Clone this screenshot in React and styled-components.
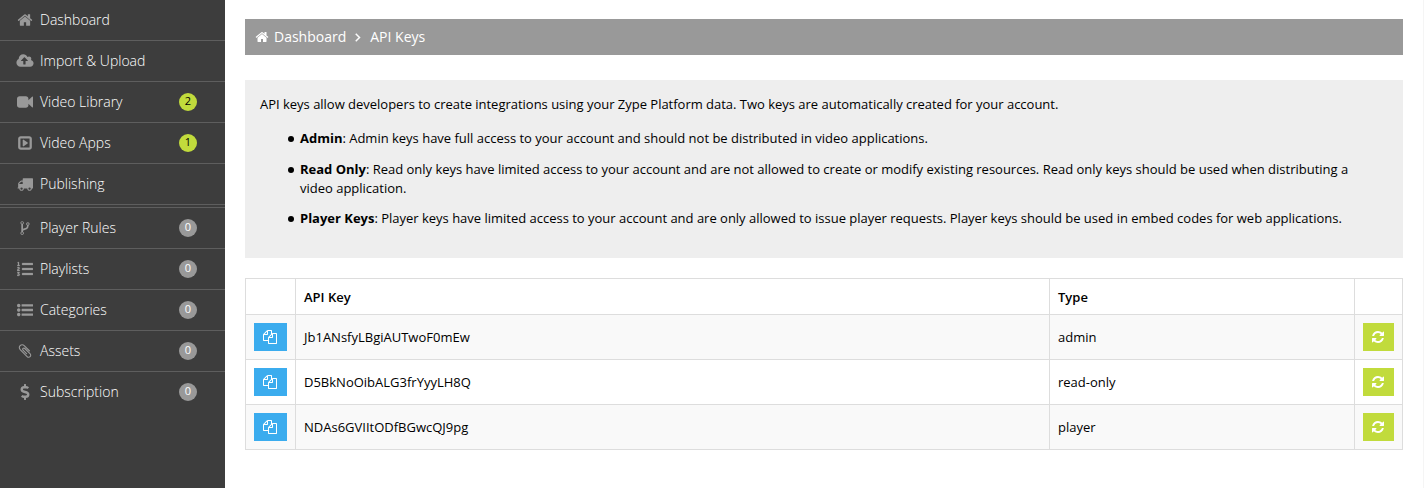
import React from "react";
import styled, { createGlobalStyle } from "styled-components";
import { FaListOl, FaDollarSign } from "react-icons/fa";

const GlobalStyle = createGlobalStyle`
  * { box-sizing: border-box; }
  body {
    margin: 0;
    background: #fff;
    color: #000;
    font-family: "Open Sans", "Noto Sans", sans-serif;
    font-size: 13px;
    line-height: 19px;
  }
`;

const paths = {
  home: "M1472 992v480q0 26-19 45t-45 19h-384v-384h-256v384h-384q-26 0-45-19t-19-45v-480q0-1 .5-3t.5-3l575-474 575 474q1 2 1 6zm223-69l-62 74q-8 9-21 11h-3q-13 0-21-7l-692-577-692 577q-12 8-24 7-13-2-21-11l-62-74q-8-10-7-23.5t11-21.5l719-599q32-26 76-26t76 26l244 204v-195q0-14 9-23t23-9h192q14 0 23 9t9 23v408l219 182q10 8 11 21.5t-7 23.5z",
  upload: "M1216 864q0-14-9-23l-352-352q-9-9-23-9t-23 9l-351 351q-10 12-10 24 0 14 9 23t23 9h224v352q0 13 9.5 22.5t22.5 9.5h192q13 0 22.5-9.5t9.5-22.5v-352h224q13 0 22.5-9.5t9.5-22.5zm640 288q0 159-112.5 271.5t-271.5 112.5h-1088q-185 0-316.5-131.5t-131.5-316.5q0-130 70-240t188-165q-2-30-2-43 0-212 150-362t362-150q156 0 285.5 87t188.5 231q71-62 166-62 106 0 181 75t75 181q0 76-41 138 130 31 213.5 135.5t83.5 238.5z",
  camera: "M1792 352v1088q0 42-39 59-13 5-25 5-27 0-45-19l-403-403v166q0 119-84.5 203.5t-203.5 84.5h-704q-119 0-203.5-84.5t-84.5-203.5v-704q0-119 84.5-203.5t203.5-84.5h704q119 0 203.5 84.5t84.5 203.5v165l403-402q18-19 45-19 12 0 25 5 39 17 39 59z",
  play: "M1216 896q0 34-27 52l-448 320q-31 23-66 5-35-18-35-57v-640q0-39 35-57 35-18 66 5l448 320q27 18 27 52zm192 480v-960q0-13-9.5-22.5t-22.5-9.5h-960q-13 0-22.5 9.5t-9.5 22.5v960q0 13 9.5 22.5t22.5 9.5h960q13 0 22.5-9.5t9.5-22.5zm256-960v960q0 119-84.5 203.5t-203.5 84.5h-960q-119 0-203.5-84.5t-84.5-203.5v-960q0-119 84.5-203.5t203.5-84.5h960q119 0 203.5 84.5t84.5 203.5z",
  truck: "M640 1408q0-52-38-90t-90-38-90 38-38 90 38 90 90 38 90-38 38-90zm-384-512h384v-256h-158q-13 0-22 9l-195 195q-9 9-9 22v30zm1280 512q0-52-38-90t-90-38-90 38-38 90 38 90 90 38 90-38 38-90zm256-1088v1024q0 15-4 26.5t-13.5 18.5-16.5 11.5-23.5 6-22.5 2-25.5 0-22.5-.5q0 106-75 181t-181 75-181-75-75-181h-384q0 106-75 181t-181 75-181-75-75-181h-64q-3 0-22.5.5t-25.5 0-22.5-2-23.5-6-16.5-11.5-13.5-18.5-4-26.5q0-26 19-45t45-19v-320q0-8-.5-35t0-38 2.5-34.5 6.5-37 14-30.5 22.5-30l198-198q19-19 50.5-32t58.5-13h160v-192q0-26 19-45t45-19h1024q26 0 45 19t19 45z",
  fork: "M672 1472q0-40-28-68t-68-28-68 28-28 68 28 68 68 28 68-28 28-68zm0-1152q0-40-28-68t-68-28-68 28-28 68 28 68 68 28 68-28 28-68zm640 128q0-40-28-68t-68-28-68 28-28 68 28 68 68 28 68-28 28-68zm96 0q0 52-26 96.5t-70 69.5q-2 287-226 414-67 38-203 81-128 40-169.5 71t-41.5 100v26q44 25 70 69.5t26 96.5q0 80-56 136t-136 56-136-56-56-136q0-52 26-96.5t70-69.5v-820q-44-25-70-69.5t-26-96.5q0-80 56-136t136-56 136 56 56 136q0 52-26 96.5t-70 69.5v497q54-26 154-57 55-17 87.5-29.5t70.5-31 59-39.5 40.5-51 28-69.5 8.5-91.5q-44-25-70-69.5t-26-96.5q0-80 56-136t136-56 136 56 56 136z",
  list: "M384 1408q0 80-56 136t-136 56-136-56-56-136 56-136 136-56 136 56 56 136zm0-512q0 80-56 136t-136 56-136-56-56-136 56-136 136-56 136 56 56 136zm1408 416v192q0 13-9.5 22.5t-22.5 9.5h-1216q-13 0-22.5-9.5t-9.5-22.5v-192q0-13 9.5-22.5t22.5-9.5h1216q13 0 22.5 9.5t9.5 22.5zm-1408-928q0 80-56 136t-136 56-136-56-56-136 56-136 136-56 136 56 56 136zm1408 416v192q0 13-9.5 22.5t-22.5 9.5h-1216q-13 0-22.5-9.5t-9.5-22.5v-192q0-13 9.5-22.5t22.5-9.5h1216q13 0 22.5 9.5t9.5 22.5zm0-512v192q0 13-9.5 22.5t-22.5 9.5h-1216q-13 0-22.5-9.5t-9.5-22.5v-192q0-13 9.5-22.5t22.5-9.5h1216q13 0 22.5 9.5t9.5 22.5z",
  clip: "M1596 1385q0 117-79 196t-196 79q-135 0-235-100l-777-776q-113-115-113-271 0-159 110-270t269-111q158 0 273 113l605 606q10 10 10 22 0 16-30.5 46.5t-46.5 30.5q-13 0-23-10l-606-607q-79-77-181-77-106 0-179 75t-73 181q0 105 76 181l776 777q63 63 145 63 64 0 106-42t42-106q0-82-63-145l-581-581q-26-24-60-24-29 0-48 19t-19 48q0 32 25 59l410 410q10 10 10 22 0 16-31 47t-47 31q-12 0-22-10l-410-410q-63-61-63-149 0-82 57-139t139-57q88 0 149 63l581 581q100 98 100 235z",
  copy: "M1696 384q40 0 68 28t28 68v1216q0 40-28 68t-68 28h-960q-40 0-68-28t-28-68v-288h-544q-40 0-68-28t-28-68v-672q0-40 20-88t48-76l408-408q28-28 76-48t88-20h416q40 0 68 28t28 68v328q68-40 128-40h416zm-544 213l-299 299h299v-299zm-640-384l-299 299h299v-299zm196 647l316-316v-416h-384v416q0 40-28 68t-68 28h-416v640h512v-256q0-40 20-88t48-76zm956 804v-1152h-384v416q0 40-28 68t-68 28h-416v640h896z",
  refresh: "M1639 1056q0 5-1 7-64 268-268 434.5t-478 166.5q-146 0-282.5-55t-243.5-157l-129 129q-19 19-45 19t-45-19-19-45v-448q0-26 19-45t45-19h448q26 0 45 19t19 45-19 45l-137 137q71 66 161 102t187 36q134 0 250-65t186-179q11-17 53-117 8-23 30-23h192q13 0 22.5 9.5t9.5 22.5zm25-800v448q0 26-19 45t-45 19h-448q-26 0-45-19t-19-45 19-45l138-138q-148-137-349-137-134 0-250 65t-186 179q-11 17-53 117-8 23-30 23h-199q-13 0-22.5-9.5t-9.5-22.5v-7q65-268 270-434.5t480-166.5q146 0 284 55.5t245 156.5l130-129q19-19 45-19t45 19 19 45z",
  angle: "M1171 960q0 13-10 23l-466 466q-10 10-23 10t-23-10l-50-50q-10-10-10-23t10-23l393-393-393-393q-10-10-10-23t10-23l50-50q10-10 23-10t23 10l466 466q10 10 10 23z",
};

const Svg = styled.svg`
  display: block;
  flex: none;
  overflow: visible;
  fill: currentColor;
  stroke: currentColor;
  stroke-width: ${(p) => p.$weight};
  width: ${(p) => p.$size}px;
  height: ${(p) => p.$size}px;
`;

const Icon = ({ name, size = 14, weight = 0 }) => (
  <Svg $size={size} $weight={weight} viewBox="0 0 1792 1792" aria-hidden="true">
    <path d={paths[name]} />
  </Svg>
);

const Page = styled.div`
  display: flex;
  height: 488px;
  overflow: hidden;
`;

const Sidebar = styled.nav`
  width: 225px;
  flex: none;
  background: #3d3d3d;
`;

const NavGroup = styled.ul`
  list-style: none;
  margin: 0;
  padding: 0;

  & + & {
    margin-top: 2px;
    border-top: 1px solid #5e5e5e;
  }
`;

const NavItem = styled.li`
  display: flex;
  align-items: center;
  height: 41px;
  padding: 0 28px 0 17px;
  border-bottom: 1px solid #5e5e5e;
  color: #fff;
  font-size: 14px;
  font-weight: 300;

  ${NavGroup} + ${NavGroup} > &:last-child {
    height: 40px;
    border-bottom: 0;
  }
`;

const NavIcon = styled.span`
  display: flex;
  justify-content: center;
  width: 16px;
  margin-right: 7px;
  color: #999;
`;

const NavLabel = styled.span`
  padding-bottom: 2px;
`;

const Badge = styled.span`
  width: 18px;
  height: 18px;
  margin-left: auto;
  border-radius: 50%;
  background: ${(p) => (p.$active ? "#c1db3c" : "#999")};
  color: ${(p) => (p.$active ? "#000" : "#fff")};
  font-size: 11px;
  font-weight: 400;
  line-height: 16px;
  text-align: center;
`;

const Main = styled.main`
  flex: 1;
  min-width: 0;
  padding: 19px 20px 0;
  border-right: 1px solid #f5f5f5;
`;

const Breadcrumb = styled.div`
  display: flex;
  align-items: center;
  height: 36px;
  padding: 0 10px;
  background: #999;
  color: #fff;
  font-size: 14px;
`;

const Crumb = styled.span`
  margin-left: 5px;
  padding-bottom: 2px;
`;

const Separator = styled.span`
  margin-left: 5px;
`;

const Info = styled.section`
  height: 178px;
  margin-top: 25px;
  padding: 15px;
  background: #eee;
`;

const Intro = styled.p`
  margin: 0 0 15px;
  letter-spacing: -0.015px;
`;

const KeyList = styled.ul`
  margin: 0;
  padding: 0 20px 0 27px;
  list-style: none;
  letter-spacing: -0.008px;
`;

const KeyNote = styled.li`
  display: flex;
  align-items: flex-start;
  margin-bottom: ${(p) => p.$gap}px;

  &::before {
    content: "";
    flex: none;
    width: 6px;
    height: 6px;
    margin: 7px 6px 0 1px;
    border-radius: 50%;
    background: #000;
  }
`;

const Table = styled.table`
  width: 1158px;
  margin-top: 20px;
  border-collapse: collapse;
  table-layout: fixed;
`;

const Col = styled.col`
  width: ${(p) => p.$width}px;
`;

const Head = styled.th`
  height: 36px;
  padding: 2px 8px 0;
  border: 1px solid #ddd;
  text-align: left;
  font-weight: 600;
`;

const Row = styled.tr`
  background: ${(p) => (p.$odd ? "#f9f9f9" : "#fff")};
`;

const Cell = styled.td`
  height: 45px;
  padding: 0 8px;
  border: 1px solid #ddd;
`;

const Button = styled.button`
  display: flex;
  align-items: center;
  justify-content: center;
  width: ${(p) => p.$width}px;
  height: 28px;
  padding: 0 1px 1px 0;
  border: 0;
  background: ${(p) => p.$color};
  color: #fff;
`;

const mainNav = [
  { label: "Dashboard", icon: <Icon name="home" size={16} /> },
  { label: "Import & Upload", icon: <Icon name="upload" size={16} /> },
  { label: "Video Library", icon: <Icon name="camera" size={16} />, count: 2 },
  { label: "Video Apps", icon: <Icon name="play" size={16} />, count: 1 },
  { label: "Publishing", icon: <Icon name="truck" size={16} /> },
];

const contentNav = [
  { label: "Player Rules", icon: <Icon name="fork" size={16} />, count: 0 },
  { label: "Playlists", icon: <FaListOl size={16} stroke="currentColor" strokeWidth={8} />, count: 0 },
  { label: "Categories", icon: <Icon name="list" size={16} />, count: 0 },
  { label: "Assets", icon: <Icon name="clip" size={16} />, count: 0 },
  { label: "Subscription", icon: <FaDollarSign size={16} />, count: 0 },
];

const keys = [
  { key: "Jb1ANsfyLBgiAUTwoF0mEw", type: "admin" },
  { key: "D5BkNoOibALG3frYyyLH8Q", type: "read-only" },
  { key: "NDAs6GVIItODfBGwcQJ9pg", type: "player" },
];

const Nav = ({ items }) => (
  <NavGroup>
    {items.map((item) => (
      <NavItem key={item.label}>
        <NavIcon>{item.icon}</NavIcon>
        <NavLabel>{item.label}</NavLabel>
        {item.count !== undefined && <Badge $active={item.count > 0}>{item.count}</Badge>}
      </NavItem>
    ))}
  </NavGroup>
);

export default function App() {
  return (
    <Page>
      <GlobalStyle />
      <Sidebar>
        <Nav items={mainNav} />
        <Nav items={contentNav} />
      </Sidebar>
      <Main>
        <Breadcrumb>
          <Icon name="home" />
          <Crumb>Dashboard</Crumb>
          <Separator>
            <Icon name="angle" weight={60} />
          </Separator>
          <Crumb>API Keys</Crumb>
        </Breadcrumb>
        <Info>
          <Intro>
            API keys allow developers to create integrations using your Zype Platform data. Two keys
            are automatically created for your account.
          </Intro>
          <KeyList>
            <KeyNote $gap={12}>
              <span>
                <b>Admin</b>: Admin keys have full access to your account and should not be
                distributed in video applications.
              </span>
            </KeyNote>
            <KeyNote $gap={11}>
              <span>
                <b>Read Only</b>: Read only keys have limited access to your account and are not
                allowed to create or modify existing resources. Read only keys should be used when
                distributing a video application.
              </span>
            </KeyNote>
            <KeyNote $gap={0}>
              <span>
                <b>Player Keys</b>: Player keys have limited access to your account and are only
                allowed to issue player requests. Player keys should be used in embed codes for web
                applications.
              </span>
            </KeyNote>
          </KeyList>
        </Info>
        <Table>
          <colgroup>
            <Col $width={50} />
            <Col $width={754} />
            <Col $width={305} />
            <Col $width={48} />
          </colgroup>
          <thead>
            <tr>
              <Head />
              <Head>API Key</Head>
              <Head>Type</Head>
              <Head />
            </tr>
          </thead>
          <tbody>
            {keys.map((row, i) => (
              <Row key={row.key} $odd={i % 2 === 0}>
                <Cell>
                  <Button $width={33} $color="#3bacee" aria-label="Copy key">
                    <Icon name="copy" size={14} />
                  </Button>
                </Cell>
                <Cell>{row.key}</Cell>
                <Cell>{row.type}</Cell>
                <Cell>
                  <Button $width={31} $color="#c1db3c" aria-label="Regenerate key">
                    <Icon name="refresh" size={14} />
                  </Button>
                </Cell>
              </Row>
            ))}
          </tbody>
        </Table>
      </Main>
    </Page>
  );
}
